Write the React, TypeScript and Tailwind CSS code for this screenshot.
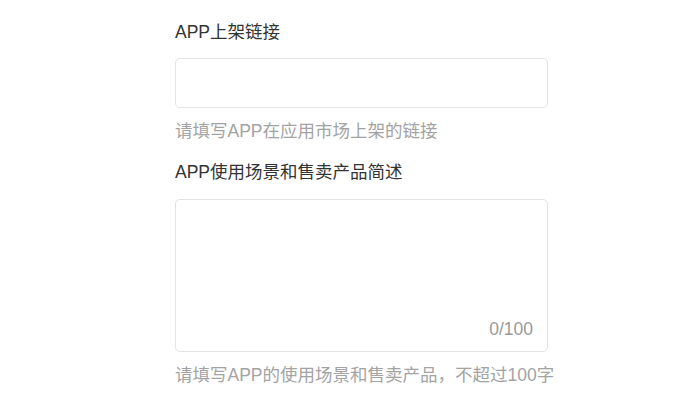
import React, { useState } from 'react';

const font = { fontFamily: '"Liberation Sans", "Noto Sans CJK SC", sans-serif' };

export default function App() {
  const [link, setLink] = useState('');
  const [desc, setDesc] = useState('');

  return (
    <div className="w-[684px] h-[396px] bg-white overflow-hidden" style={font}>
      <div className="ml-[175px] w-[373px] pt-[20px] text-[17.5px] leading-[24px]">
        {/* APP link */}
        <div className="text-[#333333]">APP上架链接</div>
        <input
          value={link}
          onChange={(e) => setLink(e.target.value)}
          className="mt-[14px] block w-full h-[50px] border border-[#e3e3e3] rounded-[5px] px-3 outline-none"
        />
        <div className="mt-[11px] text-[#a3a3a3]">请填写APP在应用市场上架的链接</div>

        {/* Scenario */}
        <div className="mt-[17px] text-[#333333]">APP使用场景和售卖产品简述</div>
        <div className="relative mt-[15px] h-[153px] border border-[#e3e3e3] rounded-[5px]">
          <textarea
            value={desc}
            maxLength={100}
            onChange={(e) => setDesc(e.target.value)}
            className="w-full h-full resize-none px-3 py-2 outline-none bg-transparent"
          />
          <span className="absolute right-[14px] bottom-[10px] text-[#999999]">{desc.length}/100</span>
        </div>
        <div className="mt-[11px] text-[#a3a3a3] whitespace-nowrap">请填写APP的使用场景和售卖产品，不超过100字</div>
      </div>
    </div>
  );
}
